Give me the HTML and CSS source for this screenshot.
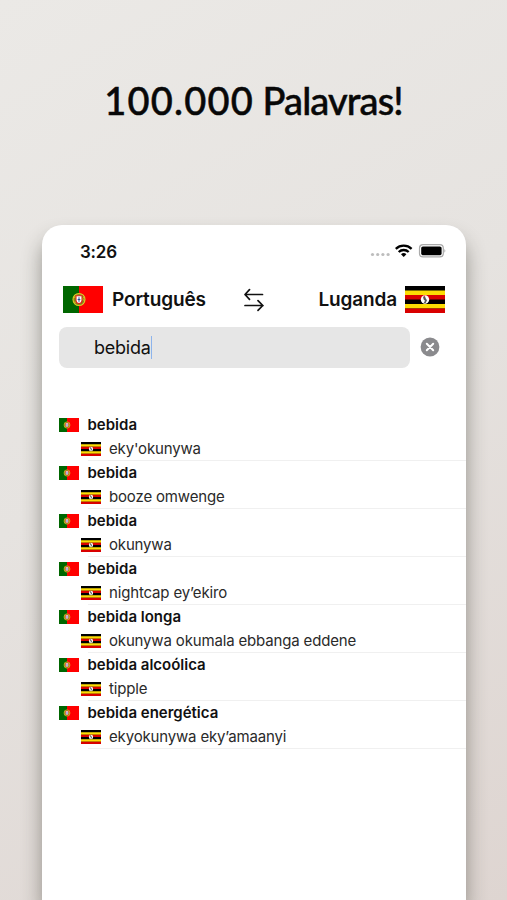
FILE: index.html
```html
<!DOCTYPE html>
<html lang="pt">
<head>
<meta charset="utf-8">
<title>Dicionário</title>
<link rel="stylesheet" href="styles.css">
</head>
<body>
<svg class="defs" width="0" height="0" aria-hidden="true">
  <symbol id="pt" viewBox="0 0 60 40" preserveAspectRatio="none">
    <path fill="#f00" d="M0 0h60v40H0z"/><path fill="#060" d="M0 0h24v40H0z"/>
    <circle cx="24" cy="20" r="9" fill="#7d8d18" stroke="#e4c928" stroke-width="1.6"/>
    <path d="M15.500 17q8-3 17 5M16 24q9 1 16-8" fill="none" stroke="#e4c928" stroke-width="1.200"/>
    <path d="M19.500 14.500h9v7a4.500 4.500 0 0 1-9 0z" fill="#fff" stroke="#e02018" stroke-width="1.600"/>
    <path d="M24 16.500v7M22 20h4" stroke="#234c9c" stroke-width="1.500"/>
  </symbol>
  <symbol id="ug" viewBox="0 0 60 40" preserveAspectRatio="none">
    <path d="M0 0h60v40H0z"/>
    <path fill="#fcdc04" d="M0 6.670h60v6.670H0zM0 26.670h60v6.670H0z"/>
    <path fill="#d90000" d="M0 13.330h60V20H0zM0 33.330h60V40H0z"/>
    <circle cx="30" cy="20" r="6.300" fill="#fff"/>
    <path d="M27 16l3-1 1 3 2 3-2 4h-3l2-3-2-2z" fill="#555"/><path d="M28 15l2-1v2z" fill="#d90000"/>
  </symbol>
</svg>
<h1 class="title"><span class="count">100.000</span> Palavras!</h1>
<main class="phone">
  <div class="status">
    <span class="time">3:26</span>
    <svg class="indicators" width="78" height="16" viewBox="0 0 78 16">
      <g fill="#bdbdbd"><circle cx="3.500" cy="10.500" r="1.600"/><circle cx="8.700" cy="10.500" r="1.600"/><circle cx="13.900" cy="10.500" r="1.600"/><circle cx="19.100" cy="10.500" r="1.600"/></g>
      <g fill="none" stroke="#000" stroke-width="2.300"><path d="M26.800 4.800a11.500 11.500 0 0 1 15.800 0"/><path d="M29.700 8a7.200 7.200 0 0 1 10 0"/></g>
      <path d="M32 10.200a4 4 0 0 1 5.400 0L34.700 13z"/>
      <rect x="50.500" y=".7" width="23.800" height="12.200" rx="3.500" fill="#fff" stroke="#aaa" stroke-width="1.200"/>
      <rect x="52.200" y="2.400" width="20.400" height="8.900" rx="1.700"/>
      <path fill="#aaa" d="M75.400 5q2 1.800 0 3.800z"/>
    </svg>
  </div>
  <div class="languages">
    <svg class="flag"><use href="#pt"/></svg>
    <span class="lang from">Português</span>
    <svg class="swap" width="22" height="24" viewBox="0 0 22 24"><path d="M19.500 6.500H2M6.500 1.700L2 6.500l4.500 4.800M2 17.500h18M15 12.700l4.800 4.800-4.800 4.800" fill="none" stroke="#111" stroke-width="1.700" stroke-linecap="round" stroke-linejoin="round"/></svg>
    <span class="lang to">Luganda</span>
    <svg class="flag"><use href="#ug"/></svg>
  </div>
  <div class="search">
    <div class="field"><span class="query">bebida</span><i class="caret"></i></div>
    <svg class="clear" width="20" height="20" viewBox="0 0 20 20"><circle cx="10" cy="10" r="9.400" fill="#8a8a8d"/><path d="M6.800 6.800l6.400 6.400M13.200 6.800l-6.400 6.400" stroke="#fff" stroke-width="2" stroke-linecap="round"/></svg>
  </div>
  <ul class="results">
    <li><div class="source"><svg><use href="#pt"/></svg><b>bebida</b></div><div class="target"><svg><use href="#ug"/></svg><span>eky'okunywa</span></div></li>
    <li><div class="source"><svg><use href="#pt"/></svg><b>bebida</b></div><div class="target"><svg><use href="#ug"/></svg><span>booze omwenge</span></div></li>
    <li><div class="source"><svg><use href="#pt"/></svg><b>bebida</b></div><div class="target"><svg><use href="#ug"/></svg><span>okunywa</span></div></li>
    <li><div class="source"><svg><use href="#pt"/></svg><b>bebida</b></div><div class="target"><svg><use href="#ug"/></svg><span>nightcap ey’ekiro</span></div></li>
    <li><div class="source"><svg><use href="#pt"/></svg><b>bebida longa</b></div><div class="target"><svg><use href="#ug"/></svg><span>okunywa okumala ebbanga eddene</span></div></li>
    <li><div class="source"><svg><use href="#pt"/></svg><b>bebida alcoólica</b></div><div class="target"><svg><use href="#ug"/></svg><span>tipple</span></div></li>
    <li><div class="source"><svg><use href="#pt"/></svg><b>bebida energética</b></div><div class="target"><svg><use href="#ug"/></svg><span>ekyokunywa eky’amaanyi</span></div></li>
  </ul>
</main>
</body>
</html>
```
FILE: styles.css
```css
* { box-sizing: border-box; }
body {
  margin: 0;
  height: 900px;
  overflow: hidden;
  display: flex;
  flex-direction: column;
  background: linear-gradient(150deg, #ebe9e6, #e6e3e0 45%, #ded5d1);
  font-family: Inter, "Liberation Sans", sans-serif;
  color: #111;
}
.defs { display: block; flex: none; height: 0; }
.title {
  margin: 0;
  height: 225px;
  padding-top: 76px;
  flex: none;
  text-align: center;
  font: 500 38px/48px Lato, sans-serif;
  letter-spacing: -.9px;
  color: #080808;
  -webkit-text-stroke: .5px #080808;
}
.count { letter-spacing: 1.2px; }
.phone {
  width: 424px;
  margin-left: 42px;
  flex: 1;
  background: #fff;
  border-radius: 20px 20px 0 0;
  box-shadow: 0 14px 20px rgba(60, 60, 50, .48);
}
.status {
  height: 52px;
  padding: 0 19px 0 38px;
  display: flex;
  justify-content: space-between;
  align-items: center;
}
.time { font-size: 17px; font-weight: 600; letter-spacing: -.2px; padding-top: 1px; }
.indicators { margin-top: 2px; }
.languages {
  height: 45px;
  padding: 0 21px;
  display: flex;
  align-items: center;
}
.flag { width: 40px; height: 27px; flex: none; }
.lang { font-size: 19px; font-weight: 600; letter-spacing: -.15px; white-space: nowrap; }
.from { width: 132px; padding-left: 9px; }
.swap { margin-left: 8px; }
.to { margin-left: auto; margin-right: 8px; }
.search { height: 49px; padding: 4.500px 0 0 17px; display: flex; align-items: flex-start; }
.field {
  width: 351px;
  height: 41px;
  padding-left: 35px;
  display: flex;
  align-items: center;
  background: #e6e6e6;
  border-radius: 8px;
}
.query { font-size: 18px; letter-spacing: -.25px; }
.caret { width: 1px; height: 23px; background: #8db4ec; }
.clear { margin: 10.500px 0 0 9.500px; }
.results { list-style: none; margin: 0; padding: 41.500px 0 0; }
.results li {
  height: 48px;
  background: linear-gradient(#f0f0f0, #f0f0f0) 46px 100% / 100% 1px no-repeat;
}
.source, .target { height: 24px; display: flex; align-items: center; font-size: 15px; white-space: nowrap; }
.source { padding-left: 16.500px; gap: 9px; }
.target { padding-left: 38.500px; gap: 8.500px; color: #2a2a2a; letter-spacing: -.16px; }
.results svg { width: 20px; height: 14px; flex: none; }
.source b { font-weight: 600; }
```
